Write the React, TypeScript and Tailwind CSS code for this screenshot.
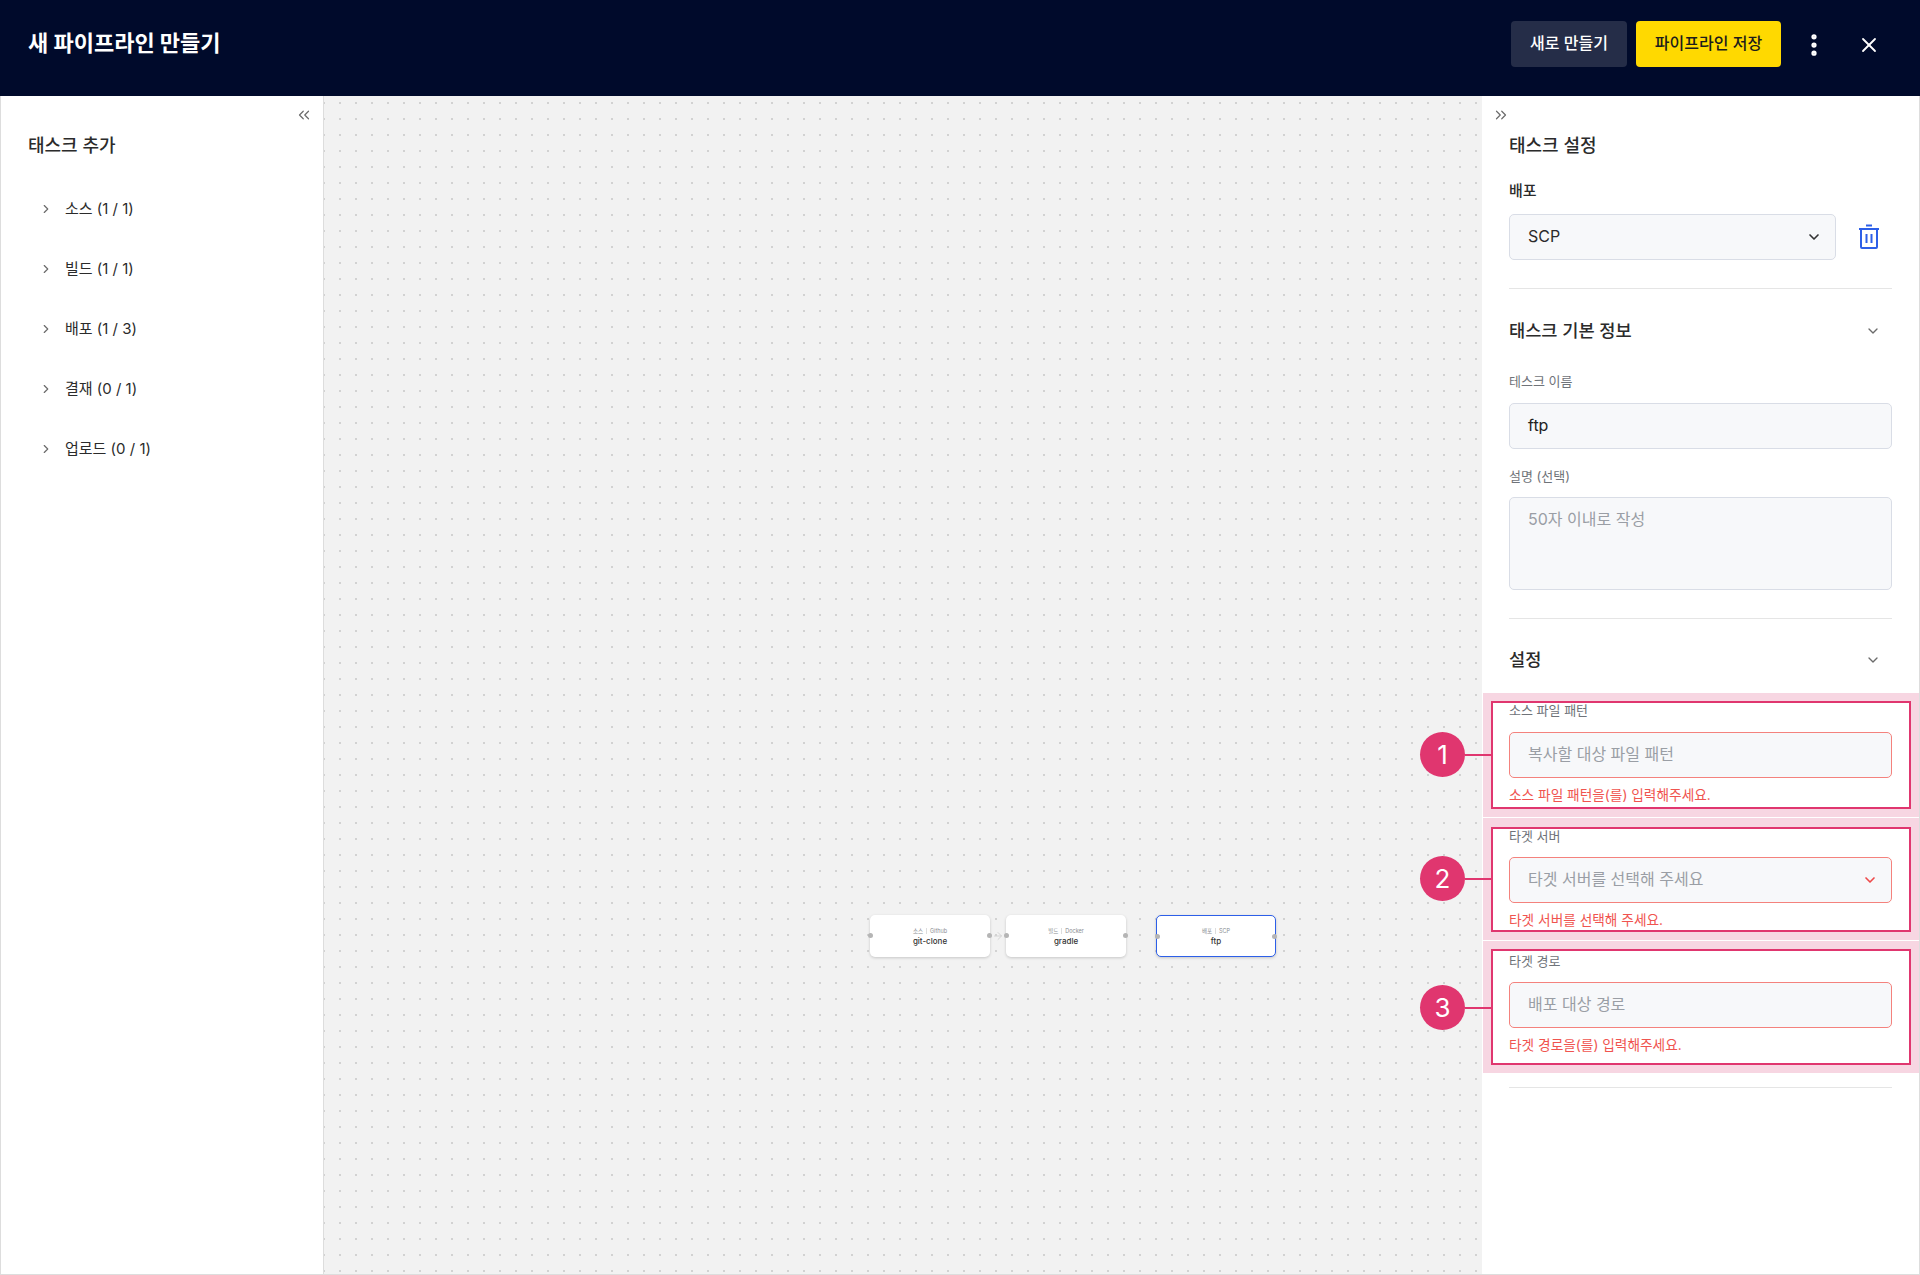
import { ArrowRight, ChevronDown, ChevronRight, ChevronsLeft, ChevronsRight, EllipsisVertical, X } from "lucide-react";

const groups = ["소스 (1 / 1)", "빌드 (1 / 1)", "배포 (1 / 3)", "결재 (0 / 1)", "업로드 (0 / 1)"];

const fieldClass = "flex items-center rounded-[5px] border bg-[#f7f8fa] pl-[18px] pr-[18px] pb-[2px] h-[46px] text-[16px]";

const Marker = ({ n, y }: { n: number; y: string }) => (
  <div className={`absolute left-[-63px] ${y} flex items-center`}>
    <div className="flex h-[45px] w-[45px] items-center justify-center rounded-full bg-[#e0366f] text-[26px] leading-none text-white">{n}</div>
    <div className="h-[2px] w-[26px] bg-[#e0366f]" />
  </div>
);

const ErrorField = ({ label, placeholder, error, select, gap, height }: { label: string; placeholder: string; error: string; select?: boolean; gap: string; height: string }) => (
  <div className={`relative ml-[8px] mr-[8px] border-2 border-[#e0366f] bg-white pl-[16px] pr-[17px] ${height}`}>
    <div className={`text-[13px] leading-4 text-[#6f7379] ${gap}`}>{label}</div>
    <div className={`${fieldClass} justify-between border-[#f4827d] text-[#9a9ea5]`}>
      <span>{placeholder}</span>
      {select && <ChevronDown className="mr-[-5px] mt-[2px] h-4 w-4 text-[#ee4a4a]" strokeWidth={2.5} />}
    </div>
    <div className="mt-[9px] text-[13.7px] leading-4 text-[#f0544f]">{error}</div>
  </div>
);

const FlowNode = ({ pos, kind, tool, name, active }: { pos: string; kind: string; tool: string; name: string; active?: boolean }) => (
  <div className={`absolute top-[819px] flex h-[42px] w-[120px] flex-col items-center justify-center rounded-[5px] bg-white shadow-[0_1px_3px_rgba(0,0,0,0.18)] ${pos} ${active ? "border-[1.5px] border-[#2d5fe8]" : ""}`}>
    <div className="flex items-center gap-[3px] text-[5.5px] leading-[8px] text-[#8a8d92]">
      <span>{kind}</span>
      <span className="h-[6px] w-px bg-[#dddddd]" />
      <span>{tool}</span>
    </div>
    <div className="mt-[1px] text-[8px] font-medium leading-[10px] text-[#333333]">{name}</div>
    <span className="absolute left-[-2px] top-[18px] h-[5px] w-[5px] rounded-full bg-[#b5b5b5]" />
    <span className="absolute right-[-2px] top-[18px] h-[5px] w-[5px] rounded-full bg-[#b5b5b5]" />
  </div>
);

const App = () => {
  return (
    <div className="flex h-screen flex-col overflow-hidden bg-white font-['Inter','Noto_Sans_CJK_KR',sans-serif] text-[#2b2b2b]">
      <header className="flex h-24 shrink-0 items-center bg-[#000a2b] pl-[28px] pr-[39px]">
        <h1 className="-mt-[10px] flex-1 text-[22px] font-bold leading-8 text-white">새 파이프라인 만들기</h1>
        <button className="mt-[-8px] h-[46px] w-[116px] rounded-[4px] bg-[#252d48] pb-[2px] text-[16px] font-medium text-white">새로 만들기</button>
        <button className="ml-[9px] mt-[-8px] h-[46px] w-[145px] rounded-[4px] bg-[#ffd900] pb-[2px] text-[16px] font-medium text-[#1c1c1c]">파이프라인 저장</button>
        <EllipsisVertical className="ml-[19px] mt-[-6px] h-[28px] w-[28px] text-white" strokeWidth={2.5} />
        <X className="ml-[29px] mt-[-6px] h-[24px] w-[24px] text-white" strokeWidth={1.8} />
      </header>

      <main className="flex min-h-0 flex-1 border-b border-[#dddddd]">
        <aside className="w-[324px] shrink-0 border-x border-[#dddddd] pl-[27px]">
          <div className="mr-[10px] mt-[10px] flex justify-end">
            <ChevronsLeft className="h-[18px] w-[18px] text-[#6b6b6b]" strokeWidth={1.6} />
          </div>
          <h2 className="mt-[9px] text-[18px] font-medium leading-[26px]">태스크 추가</h2>
          <ul className="mt-[38px] flex flex-col gap-[36px]">
            {groups.map((g) => (
              <li key={g} className="flex h-6 items-center text-[15px]">
                <ChevronRight className="ml-[11px] h-[14px] w-[14px] text-[#6b6b6b]" strokeWidth={2} />
                <span className="ml-[12px]">{g}</span>
              </li>
            ))}
          </ul>
        </aside>

        <section className="relative min-w-0 flex-1 bg-[#f2f2f2] bg-[radial-gradient(circle_at_8px_7px,#d2d2d2_1px,transparent_1px)] bg-[length:16px_16px] bg-[position:8px_0]">
          <FlowNode pos="left-[546px]" kind="소스" tool="Github" name="git-clone" />
          <ArrowRight className="absolute left-[668px] top-[834px] h-[12px] w-[12px] text-[#d4d4d4]" strokeWidth={2} />
          <FlowNode pos="left-[682px]" kind="빌드" tool="Docker" name="gradle" />
          <FlowNode pos="left-[832px]" kind="배포" tool="SCP" name="ftp" active />
        </section>

        <aside className="w-[438px] shrink-0 border-x border-x-white border-r-[#dddddd]">
          <div className="pl-[26px] pr-[27px]">
            <div className="mt-[10px] h-[18px]">
              <ChevronsRight className="-ml-[17px] h-[18px] w-[18px] text-[#6b6b6b]" strokeWidth={1.6} />
            </div>
            <h2 className="mt-[9px] text-[18px] font-medium leading-[26px]">태스크 설정</h2>
            <div className="mt-[22px] text-[15px] font-medium leading-5">배포</div>
            <div className="mt-[13px] flex items-center">
              <div className={`${fieldClass} w-[327px] justify-between border-[#d9dde6]`}>
                <span>SCP</span>
                <ChevronDown className="mr-[-5px] mt-[2px] h-4 w-4 text-[#333333]" strokeWidth={2.5} />
              </div>
              <svg className="ml-[22px]" width="22" height="26" viewBox="0 0 22 26" fill="none" stroke="#2d5fe8" strokeWidth="2">
                <path d="M1 5h20" />
                <path d="M8 1.5h6" />
                <rect x="3" y="5" width="16" height="19" rx="1" />
                <path d="M8.5 10v9M13.5 10v9" />
              </svg>
            </div>
            <div className="mt-[28px] h-px bg-[#e5e5e5]" />

            <div className="mt-[29px] flex items-center justify-between">
              <h3 className="text-[17.6px] font-medium leading-[26px]">태스크 기본 정보</h3>
              <ChevronDown className="mr-[11px] h-4 w-4 text-[#6b6b6b]" strokeWidth={2} />
            </div>
            <div className="mt-[29px] text-[13px] leading-4 text-[#6f7379]">테스크 이름</div>
            <div className={`${fieldClass} mt-[14px] border-[#d9dde6] text-[#222222]`}>ftp</div>
            <div className="mt-[19px] text-[13px] leading-4 text-[#6f7379]">설명 (선택)</div>
            <div className="mt-[13px] h-[93px] rounded-[5px] border border-[#d9dde6] bg-[#f7f8fa] pl-[18px] pt-[9px] text-[16px] leading-6 text-[#9a9ea5]">50자 이내로 작성</div>
            <div className="mt-[28px] h-px bg-[#e5e5e5]" />

            <div className="mt-[28px] flex items-center justify-between">
              <h3 className="text-[17.6px] font-medium leading-[26px]">설정</h3>
              <ChevronDown className="mr-[11px] h-4 w-4 text-[#6b6b6b]" strokeWidth={2} />
            </div>
          </div>

          <div className="mt-[20px] flex flex-col gap-px">
            <div className="relative bg-[#f7d6e2] py-[8px]">
              <Marker n={1} y="top-[39px]" />
              <ErrorField label="소스 파일 패턴" placeholder="복사할 대상 파일 패턴" error="소스 파일 패턴을(를) 입력해주세요." gap="-mt-px mb-[14px]" height="h-[108px]" />
            </div>
            <div className="relative bg-[#f7d6e2] pb-[8px] pt-[9px]">
              <Marker n={2} y="top-[38px]" />
              <ErrorField label="타겟 서버" placeholder="타겟 서버를 선택해 주세요" select error="타겟 서버를 선택해 주세요." gap="-mt-px mb-[13px]" height="h-[105px]" />
            </div>
            <div className="relative bg-[#f7d6e2] py-[8px]">
              <Marker n={3} y="top-[44px]" />
              <ErrorField label="타겟 경로" placeholder="배포 대상 경로" error="타겟 경로을(를) 입력해주세요." gap="mb-[13px] pt-[2px]" height="h-[116px]" />
            </div>
          </div>
          <div className="ml-[26px] mr-[27px] mt-[14px] h-px bg-[#e5e5e5]" />
        </aside>
      </main>
    </div>
  );
};

export default App;
